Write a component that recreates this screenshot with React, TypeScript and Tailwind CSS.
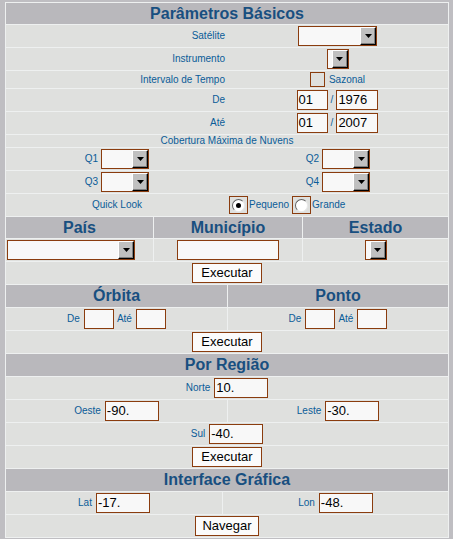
import React from "react";

const LBL = "text-[10px] leading-[12px] text-[#0a5c98] whitespace-nowrap";
const ROW = "h-[22px] bg-[#dfe0de] flex items-center";
const HDR = "bg-[#b9b8bc] flex items-center justify-center text-[16px] font-bold text-[#184f80] leading-none";

function Arrow() {
  return (
    <svg width="7" height="4" viewBox="0 0 7 4">
      <polygon points="0,0 7,0 3.5,4" fill="#000" />
    </svg>
  );
}

function Sel({ cls }: { cls: string }) {
  return (
    <div className={"flex h-[20px] border border-[#8a3c0e] bg-[#f8f8f8] justify-end " + cls}>
      <div className="w-[16px] h-full bg-[#c0c0c0] border border-t-white border-l-white border-r-black border-b-black shadow-[inset_-1px_-1px_0_#808080] flex items-center justify-center">
        <Arrow />
      </div>
    </div>
  );
}

function Txt({ cls, v }: { cls: string; v?: string }) {
  return (
    <div className={"h-[20px] border border-[#8a3c0e] bg-[#f8f8f8] text-[13px] leading-[18px] text-black pl-px overflow-hidden " + cls}>
      {v}
    </div>
  );
}

function Btn({ cls, label }: { cls: string; label: string }) {
  return (
    <div className={"h-[20px] border border-[#8a3c0e] bg-[#fbfbfb] text-[13px] leading-[18px] text-black flex items-center justify-center " + cls}>
      {label}
    </div>
  );
}

function Radio({ on }: { on?: boolean }) {
  return (
    <div className="w-[19px] h-[18px] border border-[#8a3c0e] flex items-center justify-center">
      <div className="w-[13px] h-[13px] rounded-full bg-white border border-t-[#606060] border-l-[#606060] border-r-[#e8e8e8] border-b-[#e8e8e8] flex items-center justify-center">
        {on && <div className="w-[5px] h-[5px] rounded-full bg-black" />}
      </div>
    </div>
  );
}

function LRow({ label, children, h = "h-[22px]" }: { label: string; children: React.ReactNode; h?: string }) {
  return (
    <div className={"bg-[#dfe0de] grid grid-cols-[221px_1fr] items-center " + h}>
      <div className={LBL + " text-right pr-[2px]"}>{label}</div>
      <div className="flex items-center justify-center">{children}</div>
    </div>
  );
}

export default function App() {
  return (
    <div className="w-[453px] h-[539px] bg-[#bfbec2] pl-[5px] pt-[2px] overflow-hidden" style={{ fontFamily: '"Liberation Sans", Arial, sans-serif' }}>
      <div className="w-[444px] bg-[#eef0f0] p-px flex flex-col gap-px">
        <div className={HDR + " h-[21px]"}>Parâmetros Básicos</div>
        <LRow label="Satélite">
          <Sel cls="w-[79px]" />
        </LRow>
        <LRow label="Instrumento">
          <Sel cls="w-[22px]" />
        </LRow>
        <LRow label="Intervalo de Tempo" h="h-[17px]">
          <div className="w-[15px] h-[15px] border border-[#8a3c0e]" />
          <span className={LBL + " ml-[4px]"}>Sazonal</span>
        </LRow>
        <LRow label="De">
          <Txt cls="w-[31px]" v="01" />
          <span className={LBL + " mx-[3px]"}>/</span>
          <Txt cls="w-[42px]" v="1976" />
        </LRow>
        <LRow label="Até">
          <Txt cls="w-[31px]" v="01" />
          <span className={LBL + " mx-[3px]"}>/</span>
          <Txt cls="w-[42px]" v="2007" />
        </LRow>
        <div className="h-[12px] bg-[#dfe0de] flex items-center justify-center">
          <span className={LBL}>Cobertura Máxima de Nuvens</span>
        </div>
        <div className={ROW + " grid grid-cols-[222px_1fr]"}>
          <div className="flex items-center justify-center gap-[3px]">
            <span className={LBL}>Q1</span>
            <Sel cls="w-[48px]" />
          </div>
          <div className="flex items-center justify-center gap-[3px]">
            <span className={LBL}>Q2</span>
            <Sel cls="w-[48px]" />
          </div>
        </div>
        <div className={ROW + " grid grid-cols-[222px_1fr]"}>
          <div className="flex items-center justify-center gap-[3px]">
            <span className={LBL}>Q3</span>
            <Sel cls="w-[48px]" />
          </div>
          <div className="flex items-center justify-center gap-[3px]">
            <span className={LBL}>Q4</span>
            <Sel cls="w-[48px]" />
          </div>
        </div>
        <div className={ROW + " grid grid-cols-[222px_1fr]"}>
          <div className="flex items-center justify-center">
            <span className={LBL}>Quick Look</span>
          </div>
          <div className="flex items-center pl-px">
            <Radio on />
            <span className={LBL + " ml-px"}>Pequeno</span>
            <div className="ml-[3px]">
              <Radio />
            </div>
            <span className={LBL + " ml-px"}>Grande</span>
          </div>
        </div>

        <div className="h-[21px] grid grid-cols-[147px_148px_1fr] gap-px">
          <div className={HDR}>País</div>
          <div className={HDR}>Município</div>
          <div className={HDR}>Estado</div>
        </div>
        <div className="h-[22px] grid grid-cols-[147px_148px_1fr] gap-px">
          <div className="bg-[#dfe0de] flex items-center pl-px">
            <Sel cls="w-[128px]" />
          </div>
          <div className="bg-[#dfe0de] flex items-center justify-center">
            <Txt cls="w-[102px]" />
          </div>
          <div className="bg-[#dfe0de] flex items-center justify-center">
            <Sel cls="w-[22px]" />
          </div>
        </div>
        <div className={ROW + " justify-center"}>
          <Btn cls="w-[70px]" label="Executar" />
        </div>

        <div className="h-[22px] grid grid-cols-[221px_1fr] gap-px">
          <div className={HDR}>Órbita</div>
          <div className={HDR}>Ponto</div>
        </div>
        <div className="h-[22px] grid grid-cols-[221px_1fr] gap-px">
          <div className="bg-[#dfe0de] flex items-center justify-center">
            <span className={LBL + " mr-[4px]"}>De</span>
            <Txt cls="w-[30px]" />
            <span className={LBL + " ml-[3px] mr-[4px]"}>Até</span>
            <Txt cls="w-[30px]" />
          </div>
          <div className="bg-[#dfe0de] flex items-center justify-center">
            <span className={LBL + " mr-[4px]"}>De</span>
            <Txt cls="w-[30px]" />
            <span className={LBL + " ml-[3px] mr-[4px]"}>Até</span>
            <Txt cls="w-[30px]" />
          </div>
        </div>
        <div className={ROW + " justify-center"}>
          <Btn cls="w-[70px]" label="Executar" />
        </div>

        <div className={HDR + " h-[22px]"}>Por Região</div>
        <div className={ROW + " justify-center"}>
          <span className={LBL + " mr-[4px]"}>Norte</span>
          <Txt cls="w-[54px]" v="10." />
        </div>
        <div className="h-[22px] grid grid-cols-[221px_1fr] gap-px">
          <div className="bg-[#dfe0de] flex items-center justify-center">
            <span className={LBL + " mr-[4px]"}>Oeste</span>
            <Txt cls="w-[54px]" v="-90." />
          </div>
          <div className="bg-[#dfe0de] flex items-center justify-center">
            <span className={LBL + " mr-[4px]"}>Leste</span>
            <Txt cls="w-[54px]" v="-30." />
          </div>
        </div>
        <div className={ROW + " justify-center"}>
          <span className={LBL + " mr-[4px]"}>Sul</span>
          <Txt cls="w-[54px]" v="-40." />
        </div>
        <div className={ROW + " justify-center"}>
          <Btn cls="w-[70px]" label="Executar" />
        </div>

        <div className={HDR + " h-[22px]"}>Interface Gráfica</div>
        <div className="h-[22px] grid grid-cols-[216px_1fr] gap-px">
          <div className="bg-[#dfe0de] flex items-center justify-center">
            <span className={LBL + " mr-[4px]"}>Lat</span>
            <Txt cls="w-[54px]" v="-17." />
          </div>
          <div className="bg-[#dfe0de] flex items-center justify-center">
            <span className={LBL + " mr-[4px]"}>Lon</span>
            <Txt cls="w-[54px]" v="-48." />
          </div>
        </div>
        <div className={ROW + " justify-center"}>
          <Btn cls="w-[64px]" label="Navegar" />
        </div>
      </div>
    </div>
  );
}
